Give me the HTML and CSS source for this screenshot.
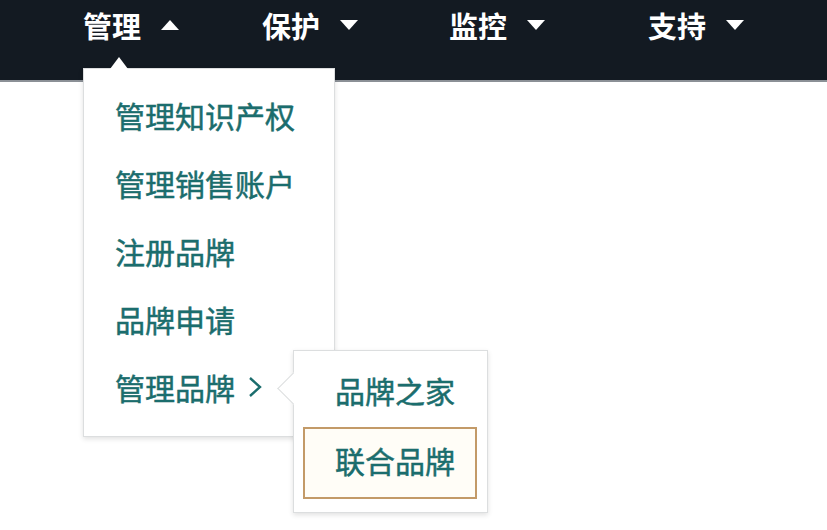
FILE: index.html
```html
<!DOCTYPE html>
<html lang="zh-CN">
<head>
<meta charset="utf-8">
<title>品牌管理菜单</title>
<link rel="stylesheet" href="styles.css">
</head>
<body>
<div class="page">
<nav class="topbar">
  <div class="nav-item nav-open">
    <span class="nav-label">管理</span>
    <svg class="caret" width="18" height="10" viewBox="0 0 18 10"><polygon points="0,10 18,10 9,0" fill="#fff"/></svg>
    <div class="menu">
      <span class="menu-arrow"></span>
      <div class="menu-item">管理知识产权</div>
      <div class="menu-item">管理销售账户</div>
      <div class="menu-item">注册品牌</div>
      <div class="menu-item">品牌申请</div>
      <div class="menu-item has-sub">管理品牌
        <svg class="chev" width="14" height="22" viewBox="0 0 14 22"><polyline points="2,2 12,11 2,20" fill="none" stroke="#1b6d6d" stroke-width="2.4"/></svg>
        <div class="submenu">
          <span class="sub-arrow"></span>
          <div class="sub-item">品牌之家</div>
          <div class="sub-item sub-active">联合品牌</div>
        </div>
      </div>
    </div>
  </div>
  <div class="nav-item">
    <span class="nav-label">保护</span>
    <svg class="caret" width="18" height="10" viewBox="0 0 18 10"><polygon points="0,0 18,0 9,10" fill="#fff"/></svg>
  </div>
  <div class="nav-item">
    <span class="nav-label">监控</span>
    <svg class="caret" width="18" height="10" viewBox="0 0 18 10"><polygon points="0,0 18,0 9,10" fill="#fff"/></svg>
  </div>
  <div class="nav-item">
    <span class="nav-label">支持</span>
    <svg class="caret" width="18" height="10" viewBox="0 0 18 10"><polygon points="0,0 18,0 9,10" fill="#fff"/></svg>
  </div>
</nav>
<main class="content"></main>
</div>
</body>
</html>
```
FILE: styles.css
```css
html, body {
  margin: 0;
  padding: 0;
  background: #ffffff;
  font-family: "Noto Sans CJK SC", "Noto Sans", sans-serif;
}

.page {
  min-height: 530px;
  display: flex;
  flex-direction: column;
}

.content {
  flex: 1;
  min-height: 448px;
}

.topbar {
  position: relative;
  z-index: 5;
  height: 80px;
  background: #131a22;
  border-bottom: 2px solid #8b9096;
  display: grid;
  grid-template-columns: 179px 187px 199px auto;
  padding-left: 83px;
}

.nav-item {
  position: relative;
  display: flex;
  align-items: center;
  gap: 20px;
  height: 50px;
}

.nav-label {
  color: #ffffff;
  font-size: 29px;
  font-weight: 700;
  line-height: 1;
}

.caret {
  display: block;
  margin-top: -1px;
}

.menu {
  position: absolute;
  left: 0;
  top: 68px;
  width: 252px;
  box-sizing: border-box;
  background: #ffffff;
  border: 1px solid #dcdedf;
  box-shadow: 0 2px 5px rgba(0, 0, 0, 0.12);
  padding: 12px 0 15px;
  z-index: 2;
}

.menu-arrow {
  position: absolute;
  left: 26px;
  top: -12px;
  width: 0;
  height: 0;
  border-left: 9px solid transparent;
  border-right: 9px solid transparent;
  border-bottom: 12px solid #ffffff;
}

.menu-item {
  height: 68px;
  line-height: 68px;
  padding-left: 31px;
  font-size: 30px;
  color: #1b6d6d;
  -webkit-text-stroke: 0.5px #1b6d6d;
  white-space: nowrap;
  display: flex;
  align-items: center;
}

.has-sub {
  position: relative;
}

.chev {
  display: block;
  margin-left: 13px;
}

.submenu {
  position: absolute;
  left: 209px;
  top: -3px;
  width: 195px;
  box-sizing: border-box;
  background: #ffffff;
  border: 1px solid #dcdedf;
  box-shadow: 0 2px 5px rgba(0, 0, 0, 0.12);
  padding: 5px 10px 13px 9px;
}

.sub-arrow {
  position: absolute;
  left: -12px;
  top: 26px;
  width: 22px;
  height: 22px;
  background: #ffffff;
  border-left: 1px solid #dcdedf;
  border-bottom: 1px solid #dcdedf;
  transform: rotate(45deg);
}

.sub-item {
  position: relative;
  height: 71px;
  line-height: 64px;
  box-sizing: border-box;
  border: 2px solid transparent;
  padding-left: 30px;
  font-size: 30px;
  color: #1b6d6d;
  -webkit-text-stroke: 0.5px #1b6d6d;
  white-space: nowrap;
}

.sub-active {
  height: 72px;
  line-height: 62px;
  border-color: #c39a68;
  background: #fffdf7;
}
```
